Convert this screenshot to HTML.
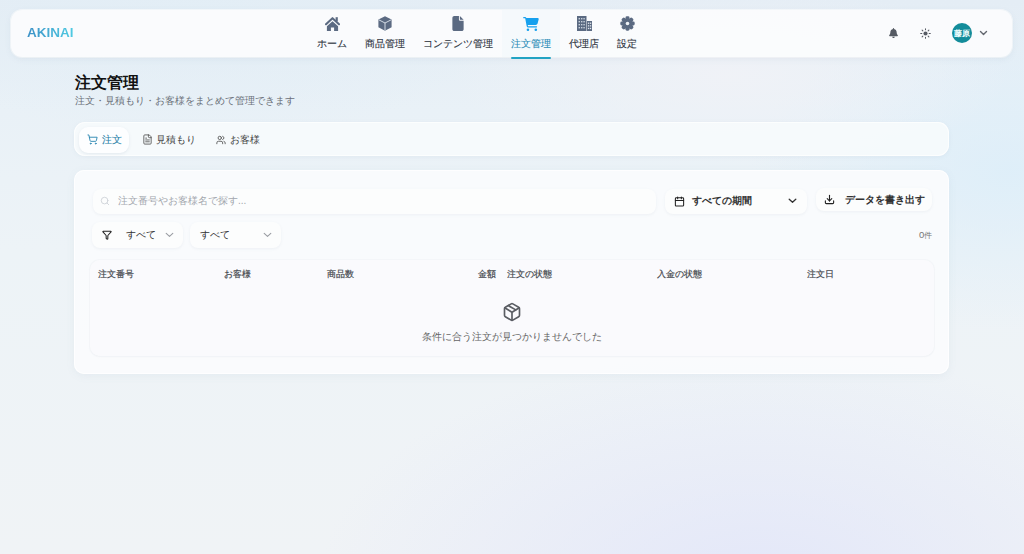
<!DOCTYPE html>
<html lang="ja">
<head>
<meta charset="utf-8">
<style>
*{box-sizing:border-box;margin:0;padding:0}
html,body{width:1024px;height:554px;overflow:hidden}
body{font-family:"Liberation Sans",sans-serif;position:relative;
background:
radial-gradient(ellipse 440px 230px at 760px 580px, rgba(226,230,249,0.9), rgba(226,230,249,0) 100%),
radial-gradient(ellipse 280px 90px at 730px 75px, rgba(240,242,247,0.95), rgba(240,242,247,0) 100%),
radial-gradient(ellipse 260px 160px at 1010px 170px, rgba(221,238,249,0.9), rgba(221,238,249,0) 100%),
radial-gradient(ellipse 300px 120px at 200px 20px, rgba(226,238,246,0.8), rgba(226,238,246,0) 100%),
linear-gradient(180deg,#e4edf5 0px,#e9f1f7 110px,#edf3f7 250px,#f0f3f6 554px);
color:#333}
.abs{position:absolute}
svg{display:block}
/* header */
.hdr{left:11px;top:10px;width:1001px;height:47px;border-radius:11px;background:rgba(251,252,253,0.94);
box-shadow:0 2px 6px rgba(120,140,160,0.10),0 0 0 1px rgba(255,255,255,0.6)}
.logo{left:27px;top:25px;font-size:13.5px;font-weight:bold;letter-spacing:0px;
background:linear-gradient(90deg,#3b90c6,#50cce3);-webkit-background-clip:text;background-clip:text;color:transparent}
.nav{left:308px;top:10px;height:47px;display:flex}
.ni{position:relative;height:47px;padding:0 9px;display:flex;flex-direction:column;align-items:center}
.ni .ic{height:15px;margin-top:6px;display:flex;align-items:center;justify-content:center}
.ni .lb{font-size:10px;line-height:10px;margin-top:8px;color:#2e343f;-webkit-text-stroke:0.12px #2e343f;white-space:nowrap}
.ni.act{background:rgba(240,247,252,0.5)}
.ni.act .lb{color:#2b8db8;-webkit-text-stroke:0.12px #2b8db8}
.ni.act:after{content:"";position:absolute;left:9px;right:9px;bottom:-2px;height:2px;background:#21a3c3;border-radius:1px}
.title{left:75px;top:73px;font-size:16px;line-height:19px;font-weight:bold;color:#111}
.sub{left:75px;top:95px;font-size:10px;line-height:11px;color:#6b7079}
/* tabs */
.tabs{left:74px;top:122px;width:875px;height:34px;border-radius:11px;background:rgba(248,251,253,0.85);
box-shadow:0 1px 4px rgba(120,140,160,0.08),inset 0 0 0 1px rgba(255,255,255,0.7)}
.tab{position:absolute;top:5px;height:26px;display:flex;align-items:center;font-size:10px;color:#444}
.tab.act{background:#fdfeff;border-radius:9px;box-shadow:0 1px 3px rgba(120,140,160,0.15);color:#2680a8;-webkit-text-stroke:0.12px #2680a8}
.card{left:74px;top:170px;width:875px;height:204px;border-radius:10px;background:rgba(250,251,253,0.95);
box-shadow:0 2px 8px rgba(120,140,160,0.08),inset 0 0 0 1px rgba(255,255,255,0.8)}
.inp{background:#fcfdfd;border-radius:8px;box-shadow:0 1px 3px rgba(140,150,170,0.10)}
.tbl{left:90px;top:260px;width:844px;height:96px;border-radius:10px;background:rgba(250,250,252,0.8);
box-shadow:0 0 0 1px rgba(240,242,246,0.5),0 1px 2px rgba(200,205,215,0.12)}
.th{top:269px;font-size:9px;line-height:10px;font-weight:normal;color:#474a50;-webkit-text-stroke:0.2px #474a50}
</style>
</head>
<body>
<div class="abs hdr"></div>
<div class="abs logo">AKINAI</div>
<div class="abs nav">
  <div class="ni"><div class="ic">
    <svg width="15" height="15" viewBox="0 0 15 15"><path d="M1 8.2L7.5 2.2L14 8.2" fill="none" stroke="#5b6a82" stroke-width="2.1" stroke-linecap="round" stroke-linejoin="round"/><rect x="10.6" y="1.2" width="2.2" height="4.2" fill="#5b6a82"/><path d="M1.9 10.3L7.5 5.2L13.1 10.3V15H9.1V11.6H5.9V15H1.9Z" fill="#5b6a82"/></svg>
  </div><div class="lb">ホーム</div></div>
  <div class="ni"><div class="ic">
    <svg width="14" height="15" viewBox="0 0 14 15"><path fill="#5b6a82" d="M7 0.3L13.6 3.6V11.3L7 14.7L0.4 11.3V3.6Z"/><path fill="none" stroke="#dfe6ee" stroke-width="0.9" d="M0.8 3.8L7 7L13.2 3.8M7 7V14.4"/></svg>
  </div><div class="lb">商品管理</div></div>
  <div class="ni"><div class="ic">
    <svg width="12" height="15" viewBox="0 0 384 512"><path fill="#5b6a82" d="M0 64C0 28.7 28.7 0 64 0H224V128c0 17.700 14.3 32 32 32H384V448c0 35.3-28.7 64-64 64H64c-35.3 0-64-28.7-64-64V64zm384 64H256V0L384 128z"/></svg>
  </div><div class="lb">コンテンツ管理</div></div>
  <div class="ni act"><div class="ic">
    <svg width="16" height="14" viewBox="0 0 576 512"><path fill="#16a0ee" d="M0 24C0 10.7 10.7 0 24 0H69.5c22 0 41.5 12.8 50.6 32h411c26.3 0 45.5 25 38.6 50.4l-41 152.3c-8.5 31.4-37 53.3-69.5 53.3H170.7l5.4 28.5c2.2 11.3 12.1 19.5 23.6 19.5H488c13.3 0 24 10.7 24 24s-10.7 24-24 24H199.7c-34.6 0-64.3-24.6-70.7-58.5L77.4 54.5c-.7-3.8-4-6.5-7.9-6.5H24C10.7 48 0 37.3 0 24zM128 464a48 48 0 1 1 96 0 48 48 0 1 1 -96 0zm336-48a48 48 0 1 1 0 96 48 48 0 1 1 0-96z"/></svg>
  </div><div class="lb">注文管理</div></div>
  <div class="ni"><div class="ic">
    <svg width="15" height="15" viewBox="0 0 15 15"><rect x="0" y="0" width="9.5" height="15" fill="#5b6a82"/><rect x="10" y="5" width="5" height="10" fill="#5b6a82"/>
    <g fill="#c9d2dd"><rect x="1.6" y="2" width="1.4" height="1.4"/><rect x="4" y="2" width="1.4" height="1.4"/><rect x="6.4" y="2" width="1.4" height="1.4"/>
    <rect x="1.6" y="5" width="1.4" height="1.4"/><rect x="4" y="5" width="1.4" height="1.4"/><rect x="6.4" y="5" width="1.4" height="1.4"/>
    <rect x="1.6" y="8" width="1.4" height="1.4"/><rect x="4" y="8" width="1.4" height="1.4"/><rect x="6.4" y="8" width="1.4" height="1.4"/>
    <rect x="1.6" y="11" width="1.4" height="1.4"/><rect x="4" y="11" width="1.4" height="1.4"/><rect x="6.4" y="11" width="1.4" height="1.4"/>
    </g><g fill="#e3e8ee"><rect x="10.9" y="6.6" width="1.3" height="1.3"/><rect x="12.9" y="6.6" width="1.3" height="1.3"/><rect x="10.9" y="9.2" width="1.3" height="1.3"/><rect x="12.9" y="9.2" width="1.3" height="1.3"/><rect x="10.9" y="11.8" width="1.3" height="1.3"/><rect x="12.9" y="11.8" width="1.3" height="1.3"/></g></svg>
  </div><div class="lb">代理店</div></div>
  <div class="ni"><div class="ic">
    <svg width="15" height="15" viewBox="0 0 15 15"><g fill="#5b6a82"><circle cx="7.5" cy="7.5" r="5.3"/><rect x="5.5" y="0.3" width="4" height="3.6" rx="1.4" transform="rotate(0 7.5 7.5)"/><rect x="5.5" y="0.3" width="4" height="3.6" rx="1.4" transform="rotate(45 7.5 7.5)"/><rect x="5.5" y="0.3" width="4" height="3.6" rx="1.4" transform="rotate(90 7.5 7.5)"/><rect x="5.5" y="0.3" width="4" height="3.6" rx="1.4" transform="rotate(135 7.5 7.5)"/><rect x="5.5" y="0.3" width="4" height="3.6" rx="1.4" transform="rotate(180 7.5 7.5)"/><rect x="5.5" y="0.3" width="4" height="3.6" rx="1.4" transform="rotate(225 7.5 7.5)"/><rect x="5.5" y="0.3" width="4" height="3.6" rx="1.4" transform="rotate(270 7.5 7.5)"/><rect x="5.5" y="0.3" width="4" height="3.6" rx="1.4" transform="rotate(315 7.5 7.5)"/></g><circle cx="7.5" cy="7.5" r="1.8" fill="#eef2f6"/></svg>
  </div><div class="lb">設定</div></div>
</div>
<!-- right controls -->
<div class="abs" style="left:889px;top:28px"><svg width="9" height="10" viewBox="0 0 448 512"><path fill="#555a63" d="M224 512c35.32 0 63.97-28.65 63.97-64H160.03c0 35.35 28.65 64 63.97 64zm215.39-149.710c-19.32-20.76-55.47-51.99-55.47-154.29 0-77.7-54.48-139.9-127.94-155.16V32c0-17.67-14.32-32-31.980-32s-31.98 14.33-31.98 32v20.84C118.56 68.1 64.08 130.3 64.08 208c0 102.3-36.15 133.53-55.47 154.29-6 6.45-8.66 14.16-8.61 21.71.11 16.4 12.98 32 32.1 32h383.8c19.12 0 32-15.6 32.1-32 .05-7.55-2.61-15.27-8.61-21.71z"/></svg></div>
<div class="abs" style="left:920px;top:28px"><svg width="11" height="11" viewBox="0 0 24 24" fill="none" stroke="#555a63" stroke-width="2.2" stroke-linecap="round"><circle cx="12" cy="12" r="4.5" fill="#555a63" stroke="none"/><path d="M12 1.5v2.5M12 20v2.5M1.5 12h2.5M20 12h2.5M4.6 4.6l1.7 1.7M17.7 17.7l1.7 1.7M4.6 19.4l1.7-1.7M17.7 6.3l1.7-1.7"/></svg></div>
<div class="abs" style="left:952px;top:23px;width:20px;height:20px;border-radius:50%;background:#138c9a;color:#f4ffff;font-size:8px;line-height:21px;text-align:center;font-weight:bold">藤原</div>
<div class="abs" style="left:979px;top:29px"><svg width="9" height="8" viewBox="0 0 9 8" fill="none" stroke="#62666e" stroke-width="1.4" stroke-linecap="round" stroke-linejoin="round"><path d="M1.5 2.5L4.5 5.5L7.5 2.5"/></svg></div>

<div class="abs title">注文管理</div>
<div class="abs sub">注文・見積もり・お客様をまとめて管理できます</div>

<div class="abs tabs">
  <div class="tab act" style="left:5px;width:50px;padding-left:8px">
    <svg width="11" height="11" style="margin-top:-2px" viewBox="0 0 24 24" fill="none" stroke="#2a86b0" stroke-width="2" stroke-linecap="round" stroke-linejoin="round"><circle cx="8" cy="21" r="1"/><circle cx="19" cy="21" r="1"/><path d="M2.05 2.05h2l2.66 12.42a2 2 0 0 0 2 1.58h9.78a2 2 0 0 0 1.95-1.57l1.65-7.43H5.12"/></svg>
    <span style="margin-left:4px">注文</span></div>
  <div class="tab" style="left:61px;padding-left:8px">
    <svg width="11" height="11" style="margin-left:-1px;margin-top:-1px" viewBox="0 0 24 24" fill="none" stroke="#555" stroke-width="1.9" stroke-linecap="round" stroke-linejoin="round"><path d="M15 2H6a2 2 0 0 0-2 2v16a2 2 0 0 0 2 2h12a2 2 0 0 0 2-2V7Z"/><path d="M14 2v4a2 2 0 0 0 2 2h4"/><path d="M10 9H8"/><path d="M16 13H8"/><path d="M16 17H8"/></svg>
    <span style="margin-left:3px">見積もり</span></div>
  <div class="tab" style="left:135px;padding-left:8px">
    <svg width="10" height="10" style="margin-left:-1px" viewBox="0 0 24 24" fill="none" stroke="#555" stroke-width="2.1" stroke-linecap="round" stroke-linejoin="round"><path d="M16 21v-2a4 4 0 0 0-4-4H6a4 4 0 0 0-4 4v2"/><circle cx="9" cy="7" r="4"/><path d="M22 21v-2a4 4 0 0 0-3-3.87"/><path d="M16 3.13a4 4 0 0 1 0 7.75"/></svg>
    <span style="margin-left:4px">お客様</span></div>
</div>

<div class="abs card"></div>
<!-- search -->
<div class="abs inp" style="left:93px;top:189px;width:563px;height:25px"></div>
<div class="abs" style="left:100px;top:196px"><svg width="10" height="10" viewBox="0 0 24 24" fill="none" stroke="#cfd3d9" stroke-width="2.2" stroke-linecap="round"><circle cx="11" cy="11" r="8"/><path d="m21 21-4.3-4.3"/></svg></div>
<div class="abs" style="left:118px;top:196px;font-size:10px;line-height:10px;color:#a3a7ae">注文番号やお客様名で探す...</div>
<!-- date select -->
<div class="abs inp" style="left:665px;top:189px;width:142px;height:25px"></div>
<div class="abs" style="left:674px;top:196px"><svg width="11" height="11" viewBox="0 0 24 24" fill="none" stroke="#222" stroke-width="2.3" stroke-linecap="round" stroke-linejoin="round"><path d="M8 2v4"/><path d="M16 2v4"/><rect width="18" height="18" x="3" y="4" rx="2"/><path d="M3 10h18"/></svg></div>
<div class="abs" style="left:692px;top:196px;font-size:10px;line-height:10px;font-weight:bold;color:#333">すべての期間</div>
<div class="abs" style="left:788px;top:197px"><svg width="9" height="7" viewBox="0 0 9 7" fill="none" stroke="#333" stroke-width="1.3" stroke-linecap="round" stroke-linejoin="round"><path d="M1.2 2.2L4.5 5.3L7.8 2.2"/></svg></div>
<!-- export -->
<div class="abs inp" style="left:816px;top:188px;width:116px;height:23px"></div>
<div class="abs" style="left:824px;top:194px"><svg width="11" height="11" viewBox="0 0 24 24" fill="none" stroke="#222" stroke-width="2.4" stroke-linecap="round" stroke-linejoin="round"><path d="M21 15v4a2 2 0 0 1-2 2H5a2 2 0 0 1-2-2v-4"/><polyline points="7 10 12 15 17 10"/><line x1="12" x2="12" y1="15" y2="3"/></svg></div>
<div class="abs" style="left:845px;top:195px;font-size:10px;line-height:10px;font-weight:bold;color:#333">データを書き出す</div>
<!-- filters -->
<div class="abs inp" style="left:92px;top:222px;width:91px;height:26px"></div>
<div class="abs" style="left:102px;top:230px"><svg width="10" height="10" viewBox="0 0 24 24" fill="none" stroke="#222" stroke-width="2.5" stroke-linecap="round" stroke-linejoin="round"><path d="M10 20a1 1 0 0 0 .553.895l2 1A1 1 0 0 0 14 21v-7a2 2 0 0 1 .517-1.341L21.74 4.67A1 1 0 0 0 21 3H3a1 1 0 0 0-.742 1.67l7.225 7.989A2 2 0 0 1 10 14z"/></svg></div>
<div class="abs" style="left:126px;top:230px;font-size:10px;line-height:10px;color:#333">すべて</div>
<div class="abs" style="left:165px;top:232px"><svg width="9" height="6" viewBox="0 0 9 6" fill="none" stroke="#9a9da3" stroke-width="1.1" stroke-linecap="round" stroke-linejoin="round"><path d="M1.2 1.4L4.5 4.4L7.8 1.4"/></svg></div>
<div class="abs inp" style="left:190px;top:222px;width:91px;height:26px"></div>
<div class="abs" style="left:200px;top:230px;font-size:10px;line-height:10px;color:#333">すべて</div>
<div class="abs" style="left:263px;top:232px"><svg width="9" height="6" viewBox="0 0 9 6" fill="none" stroke="#9a9da3" stroke-width="1.1" stroke-linecap="round" stroke-linejoin="round"><path d="M1.2 1.4L4.5 4.4L7.8 1.4"/></svg></div>
<div class="abs" style="left:919px;top:230px;font-size:8px;line-height:9px;color:#777"><span style="font-size:9.5px">0</span>件</div>
<!-- table -->
<div class="abs tbl"></div>
<div class="abs th" style="left:98px">注文番号</div>
<div class="abs th" style="left:224px">お客様</div>
<div class="abs th" style="left:327px">商品数</div>
<div class="abs th" style="left:478px">金額</div>
<div class="abs th" style="left:507px">注文の状態</div>
<div class="abs th" style="left:657px">入金の状態</div>
<div class="abs th" style="left:807px">注文日</div>
<div class="abs" style="left:502px;top:302px"><svg width="20" height="20" viewBox="0 0 24 24" fill="none" stroke="#5a5d63" stroke-width="2" stroke-linecap="round" stroke-linejoin="round"><path d="M11 21.73a2 2 0 0 0 2 0l7-4A2 2 0 0 0 21 16V8a2 2 0 0 0-1-1.73l-7-4a2 2 0 0 0-2 0l-7 4A2 2 0 0 0 3 8v8a2 2 0 0 0 1 1.73z"/><path d="M12 22V12"/><path d="m3.3 7 7.703 4.734a2 2 0 0 0 1.994 0L20.7 7"/><path d="m7.5 4.27 9 5.15"/></svg></div>
<div class="abs" style="left:422px;top:332px;width:180px;text-align:center;font-size:10px;line-height:10px;color:#666">条件に合う注文が見つかりませんでした</div>
</body>
</html>
